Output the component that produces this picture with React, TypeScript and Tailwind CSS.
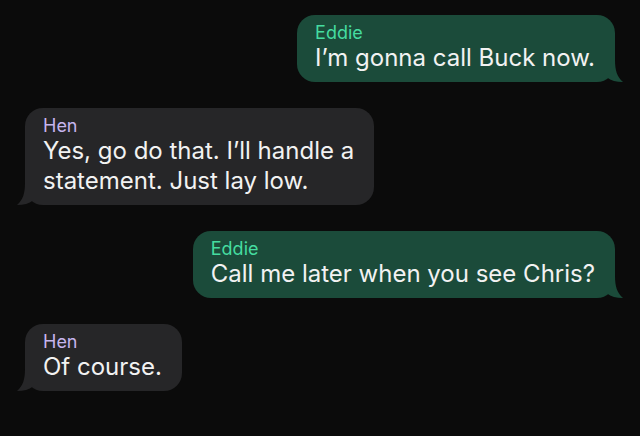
import React from "react";

type Msg = { from: "me" | "them"; name: string; lines: string[] };

const messages: Msg[] = [
  { from: "me", name: "Eddie", lines: ["I’m gonna call Buck now."] },
  { from: "them", name: "Hen", lines: ["Yes, go do that. I’ll handle a", "statement. Just lay low."] },
  { from: "me", name: "Eddie", lines: ["Call me later when you see Chris?"] },
  { from: "them", name: "Hen", lines: ["Of course."] },
];

function Tail({ side, color }: { side: "left" | "right"; color: string }) {
  if (side === "right") {
    return (
      <svg
        className="absolute bottom-0 right-[-9px]"
        width="20"
        height="22"
        viewBox="0 0 20 22"
      >
        <path d="M0 0 H11 C11 10 13 17 19 22 C12 22 7 20.5 3 17.5 C2 19 0 20 -3 21 H0 Z" fill={color} />
      </svg>
    );
  }
  return (
    <svg
      className="absolute bottom-0 left-[-9px]"
      width="20"
      height="22"
      viewBox="0 0 20 22"
    >
      <path d="M20 0 H9 C9 10 7 17 1 22 C8 22 13 20.5 17 17.5 C18 19 20 20 23 21 H20 Z" fill={color} />
    </svg>
  );
}

function Bubble({ msg }: { msg: Msg }) {
  const mine = msg.from === "me";
  const bg = mine ? "#1b4b3a" : "#262628";
  return (
    <div className={mine ? "flex justify-end pr-[25px]" : "flex justify-start pl-[25px]"}>
      <div
        className={
          "relative rounded-[18px] pl-[18px] pr-[20px] pt-2 pb-[9px] " +
          (mine ? "bg-[#1b4b3a]" : "bg-[#262628]")
        }
      >
        <Tail side={mine ? "right" : "left"} color={bg} />
        <div className="relative">
          <div
            className={
              "text-[18px] leading-[20px] " + (mine ? "text-[#45dca0]" : "text-[#c6b5ee]")
            }
          >
            {msg.name}
          </div>
          <div className="text-[24px] leading-[30px] text-[#f2f2f2] whitespace-nowrap">
            {msg.lines.map((l, i) => (
              <div key={i}>{l}</div>
            ))}
          </div>
        </div>
      </div>
    </div>
  );
}

export default function App() {
  return (
    <div
      className="w-[640px] h-[436px] bg-[#0b0b0b] pt-[15px] flex flex-col gap-[26px] overflow-hidden"
      style={{ fontFamily: "Inter, 'Liberation Sans', sans-serif" }}
    >
      {messages.map((m, i) => (
        <Bubble key={i} msg={m} />
      ))}
    </div>
  );
}
